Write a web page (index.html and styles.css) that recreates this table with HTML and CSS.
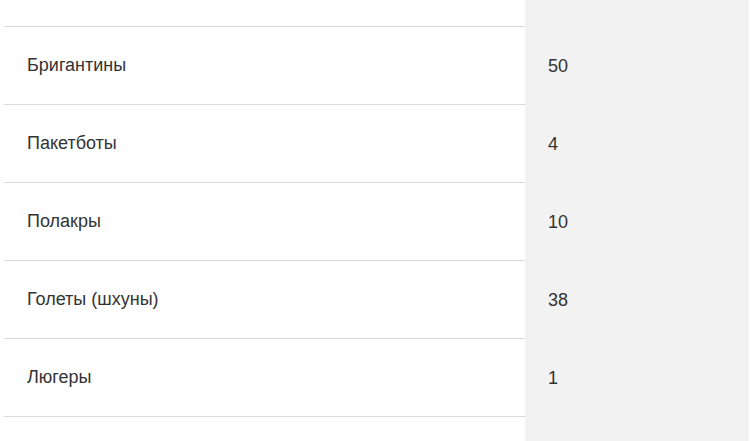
FILE: index.html
```html
<!DOCTYPE html>
<html>
<head>
<meta charset="utf-8">
<link rel="stylesheet" href="styles.css">
</head>
<body>
<div class="table">
  <div class="row first"><div class="name"></div><div class="val"></div></div>
  <div class="row"><div class="name">Бригантины</div><div class="val">50</div></div>
  <div class="row"><div class="name">Пакетботы</div><div class="val">4</div></div>
  <div class="row"><div class="name">Полакры</div><div class="val">10</div></div>
  <div class="row"><div class="name">Голеты (шхуны)</div><div class="val">38</div></div>
  <div class="row"><div class="name">Люгеры</div><div class="val">1</div></div>
  <div class="row"><div class="name"></div><div class="val"></div></div>
</div>
</body>
</html>
```
FILE: styles.css
```css
html, body {
  margin: 0;
  padding: 0;
  background: #ffffff;
  overflow: hidden;
}
.table {
  padding: 0 3px 0 4px;
  font-family: "Liberation Sans", Arial, sans-serif;
  font-size: 18px;
  color: #333333;
}
.row {
  display: flex;
  height: 78px;
}
.row.first {
  height: 27px;
}
.name {
  width: 521px;
  box-sizing: border-box;
  padding: 0 23px;
  border-bottom: 1px solid #d9d9d9;
  display: flex;
  align-items: center;
}
.val {
  width: 224px;
  box-sizing: border-box;
  padding: 0 23px;
  background: #f2f2f2;
  display: flex;
  align-items: center;
}
```
